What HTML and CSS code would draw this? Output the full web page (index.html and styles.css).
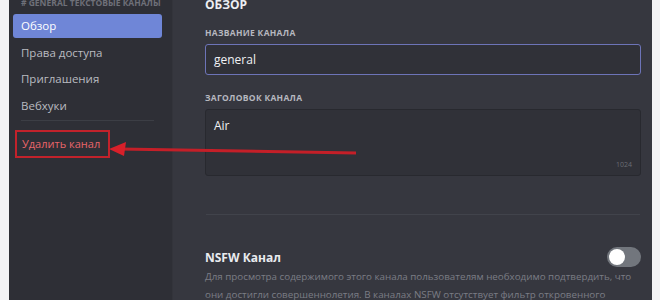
FILE: index.html
```html
<!DOCTYPE html>
<html lang="ru">
<head>
    <meta charset="UTF-8">
    <title>Настройки канала</title>
    <link rel="stylesheet" href="styles.css">
</head>
<body>

    <div class="window">
        <div class="sidebar">
            <div class="sidebar-header"># GENERAL ТЕКСТОВЫЕ КАНАЛЫ</div>
            <div class="side-item active">Обзор</div>
            <div class="side-item">Права доступа</div>
            <div class="side-item">Приглашения</div>
            <div class="side-item">Вебхуки</div>
            <div class="side-sep"></div>
            <div class="side-item danger">Удалить канал</div>
        </div>

        <div class="main">
            <h2 class="title">Обзор</h2>

            <div class="label">Название канала</div>
            <div class="input focused">general</div>

            <div class="label">Заголовок канала</div>
            <div class="textarea">
                <span>Air</span>
                <span class="counter">1024</span>
            </div>

            <div class="divider"></div>

            <div class="switch-row">
                <div class="switch-title">NSFW Канал</div>
                <div class="toggle"><div class="knob"></div></div>
            </div>
            <p class="note">Для просмотра содержимого этого канала пользователям необходимо подтвердить, что они достигли совершеннолетия. В каналах NSFW отсутствует фильтр откровенного</p>
        </div>

        <!-- annotation on top of the screenshot -->
        <svg class="arrow" width="660" height="300" viewBox="0 0 660 300">
            <line x1="356" y1="153" x2="120" y2="149" stroke="#c41f28" stroke-width="3"/>
            <polygon points="109,149 126,142 124,156" fill="#d8202a"/>
        </svg>
    </div>

</body>
</html>
```

FILE: styles.css
```css
body {
    margin: 0;
    background-color: #f3f3f5;
    font-family: 'Open Sans', 'Noto Sans', sans-serif;
    overflow: hidden;
}
.window {
    display: flex;
    margin-left: 9px;
    width: 643px;
    height: 300px;
    overflow: hidden;
    background-color: #36373f;
}
.sidebar {
    width: 163px;
    background-color: #2e2f36;
    padding: 0 10px 0 4px;
    box-sizing: border-box;
    flex-shrink: 0;
}
.sidebar-header {
    height: 16px;
    margin-top: -2px;
    padding-left: 8px;
    font-size: 8.5px;
    line-height: 10px;
    font-weight: bold;
    color: #6e7079;
    white-space: nowrap;
    overflow: hidden;
}
.side-item {
    height: 24px;
    line-height: 24px;
    margin-bottom: 2.5px;
    padding-left: 8px;
    border-radius: 3px;
    font-size: 11.5px;
    color: #b9bbc0;
}
.side-item.active {
    background-color: #6f86d7;
    color: #fff;
}
.side-sep {
    height: 1px;
    background-color: #3c3e45;
    margin: 2px 8px 9px 8px;
}
.side-item.danger {
    width: 86px;
    height: 24px;
    line-height: 24px;
    margin-left: 2px;
    padding-left: 5px;
    border: 2px solid #c2222b;
    border-radius: 0;
    color: #e9656a;
    font-size: 11px;
}
.main {
    flex: 1;
    padding: 0 11px 0 32px;
    border-left: 1px solid #33343b;
}
.title {
    margin: -4px 0 14px 0;
    font-size: 12px;
    font-weight: bold;
    text-transform: uppercase;
    color: #eceef2;
}
.label {
    font-size: 8.5px;
    font-weight: bold;
    text-transform: uppercase;
    letter-spacing: 0.3px;
    color: #b6b8bf;
    margin-bottom: 6px;
}
.input {
    height: 29px;
    line-height: 29px;
    padding-left: 8px;
    margin-bottom: 17px;
    background-color: #303138;
    border: 1px solid #24252b;
    border-radius: 3px;
    font-size: 12px;
    color: #f0f1f4;
}
.input.focused {
    border-color: #6d74b8;
}
.textarea {
    position: relative;
    height: 51px;
    padding: 7px 8px;
    background-color: #303138;
    border: 1px solid #28292f;
    border-radius: 3px;
    font-size: 12px;
    color: #f0f1f4;
}
.counter {
    position: absolute;
    right: 8px;
    bottom: 6px;
    font-size: 7px;
    color: #6a6c74;
}
.divider {
    height: 1px;
    margin: 38px 1px 32px 1px;
    background-color: #41434b;
}
.switch-row {
    display: flex;
    justify-content: space-between;
    align-items: center;
}
.switch-title {
    font-size: 12px;
    font-weight: bold;
    color: #e9ebef;
}
.toggle {
    width: 34px;
    height: 20px;
    border-radius: 10px;
    background-color: #72767d;
    position: relative;
}
.knob {
    position: absolute;
    left: 2px;
    top: 2px;
    width: 16px;
    height: 16px;
    border-radius: 50%;
    background-color: #fff;
}
.note {
    margin: 1px 0 0 0;
    font-size: 9.8px;
    line-height: 18px;
    color: #7b7d85;
}
.arrow {
    position: absolute;
    left: 0;
    top: 0;
    pointer-events: none;
}
```
